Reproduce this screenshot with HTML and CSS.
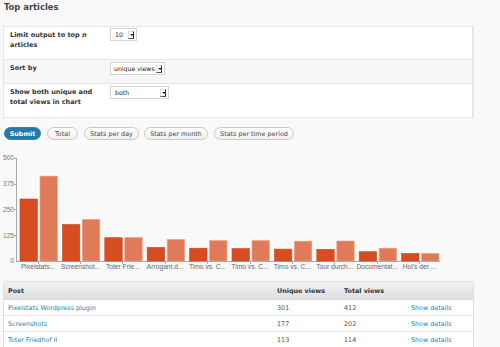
FILE: index.html
```html
<!DOCTYPE html>
<html>
<head>
<meta charset="utf-8">
<link rel="stylesheet" href="styles.css">
</head>
<body>
<div class="wrap">
  <h2 class="title">Top articles</h2>

  <div class="form">
    <div class="form-row r1">
      <div class="label">Limit output to top <em>n</em> articles</div>
      <div class="field"><div class="select w-10"><span class="val">10</span><span class="arrow"></span></div></div>
    </div>
    <div class="form-row r2 alt">
      <div class="label">Sort by</div>
      <div class="field"><div class="select w-sort"><span class="val">unique views</span><span class="arrow"></span></div></div>
    </div>
    <div class="form-row r3">
      <div class="label">Show both unique and total views in chart</div>
      <div class="field"><div class="select w-both"><span class="val">both</span><span class="arrow"></span></div></div>
    </div>
  </div>

  <div class="buttons">
    <span class="btn primary b-submit">Submit</span>
    <span class="btn b-total">Total</span>
    <span class="btn b-day">Stats per day</span>
    <span class="btn b-month">Stats per month</span>
    <span class="btn b-period">Stats per time period</span>
  </div>

  <svg class="chart" width="471" height="125" viewBox="3 150 471 125" xmlns="http://www.w3.org/2000/svg">
    <g class="ylab">
      <text x="14" y="160.4">500</text>
      <text x="14" y="186.2">375</text>
      <text x="14" y="212">250</text>
      <text x="14" y="237.6">125</text>
      <text x="14" y="263.4">0</text>
    </g>
    <g class="axis">
      <line x1="16.5" y1="158" x2="16.5" y2="262"/>
      <line x1="16" y1="261.5" x2="440" y2="261.5"/>
      <line x1="14" y1="158.5" x2="16.5" y2="158.5"/>
      <line x1="14" y1="184.5" x2="16.5" y2="184.5"/>
      <line x1="14" y1="209.5" x2="16.5" y2="209.5"/>
      <line x1="14" y1="235.5" x2="16.5" y2="235.5"/>
      <line x1="38.5" y1="261.5" x2="38.5" y2="264"/>
      <line x1="80.5" y1="261.5" x2="80.5" y2="264"/>
      <line x1="122.5" y1="261.5" x2="122.5" y2="264"/>
      <line x1="165.5" y1="261.5" x2="165.5" y2="264"/>
      <line x1="207.5" y1="261.5" x2="207.5" y2="264"/>
      <line x1="250.5" y1="261.5" x2="250.5" y2="264"/>
      <line x1="292.5" y1="261.5" x2="292.5" y2="264"/>
      <line x1="334.5" y1="261.5" x2="334.5" y2="264"/>
      <line x1="377.5" y1="261.5" x2="377.5" y2="264"/>
      <line x1="419.5" y1="261.5" x2="419.5" y2="264"/>
    </g>
    <g class="dark">
      <rect x="20" y="199" width="17.4" height="62"/>
      <rect x="62.4" y="224.5" width="17.4" height="36.5"/>
      <rect x="104.8" y="237.7" width="17.4" height="23.3"/>
      <rect x="147.2" y="247.4" width="17.4" height="13.6"/>
      <rect x="189.6" y="248.2" width="17.4" height="12.8"/>
      <rect x="232" y="248.6" width="17.4" height="12.4"/>
      <rect x="274.4" y="249.1" width="17.4" height="11.9"/>
      <rect x="316.8" y="249.3" width="17.4" height="11.7"/>
      <rect x="359.2" y="251.7" width="17.4" height="9.3"/>
      <rect x="401.6" y="253.4" width="17.4" height="7.6"/>
    </g>
    <g class="light">
      <rect x="40" y="176.1" width="17.4" height="84.9"/>
      <rect x="82.4" y="219.4" width="17.4" height="41.6"/>
      <rect x="124.8" y="237.5" width="17.4" height="23.5"/>
      <rect x="167.2" y="239.4" width="17.4" height="21.6"/>
      <rect x="209.6" y="240.6" width="17.4" height="20.4"/>
      <rect x="252" y="240.6" width="17.4" height="20.4"/>
      <rect x="294.4" y="241.2" width="17.4" height="19.8"/>
      <rect x="336.8" y="241" width="17.4" height="20"/>
      <rect x="379.2" y="248.2" width="17.4" height="12.8"/>
      <rect x="421.6" y="253.4" width="17.4" height="7.6"/>
    </g>
    <g class="xlab">
      <text x="38" y="269">Pixelstats...</text>
      <text x="80.4" y="269">Screenshot...</text>
      <text x="122.8" y="269">Toter Frie...</text>
      <text x="165.2" y="269">Arrogant.d...</text>
      <text x="207.6" y="269">Timo vs. C...</text>
      <text x="250" y="269">Timo vs. C...</text>
      <text x="292.4" y="269">Timo vs. C...</text>
      <text x="334.8" y="269">Tour durch...</text>
      <text x="377.2" y="269">Documentat...</text>
      <text x="419.6" y="269">Hol's der ...</text>
    </g>
  </svg>

  <div class="data">
    <div class="row head">
      <div class="c1">Post</div>
      <div class="c2">Unique views</div>
      <div class="c3">Total views</div>
      <div class="c4"></div>
    </div>
    <div class="row">
      <div class="c1"><a>Pixelstats Wordpress plugin</a></div>
      <div class="c2">301</div>
      <div class="c3">412</div>
      <div class="c4"><a>Show details</a></div>
    </div>
    <div class="row">
      <div class="c1"><a>Screenshots</a></div>
      <div class="c2">177</div>
      <div class="c3">202</div>
      <div class="c4"><a>Show details</a></div>
    </div>
    <div class="row">
      <div class="c1"><a>Toter Friedhof II</a></div>
      <div class="c2">113</div>
      <div class="c3">114</div>
      <div class="c4"><a>Show details</a></div>
    </div>
  </div>
</div>
</body>
</html>
```

FILE: styles.css
```css
html, body {
  margin: 0;
  padding: 0;
  background: #f9f9f9;
  overflow: hidden;
}
body {
  width: 500px;
  height: 347px;
  font-family: "DejaVu Sans", sans-serif;
  color: #333;
}
.wrap {
  margin-left: 3px;
  width: 471px;
}
.title {
  margin: 1px 0 13px 1px;
  font-size: 8.4px;
  line-height: 12px;
  font-weight: bold;
  color: #464646;
}

/* form table */
.form {
  background: #fff;
  border: 1px solid #e4e4e4;
  border-right: 2px solid #e6e6e6;
}
.form-row {
  display: flex;
  border-bottom: 1px solid #e6e6e6;
}
.form-row:last-child { border-bottom: 0; }
.form-row.alt { background: #f7f7f7; }
.r1 { height: 32px; }
.r2 { height: 23px; }
.r3 { height: 33px; }
.label {
  box-sizing: border-box;
  width: 106px;
  padding: 2.5px 14px 0 6px;
  font-size: 6.5px;
  line-height: 10.5px;
  font-weight: bold;
  color: #333;
}
.label em { font-style: italic; }
.field { padding-top: 2px; }
.r1 .field { padding-top: 1px; }
.select {
  box-sizing: border-box;
  height: 13px;
  display: flex;
  align-items: center;
  justify-content: space-between;
  background: #fff;
  border: 1px solid #d4d4d4;
  padding: 0 2px 0 4px;
  font-size: 6.2px;
  color: #222;
}
.w-10 { width: 27px; }
.w-sort { width: 55px; padding-left: 3px; }
.w-both { width: 59px; }
.arrow {
  position: relative;
  box-sizing: border-box;
  width: 6px;
  height: 8px;
  background: #fff;
  border: 1px solid #ddd;
  border-right-color: #333;
  border-bottom-color: #555;
}
.arrow::after {
  content: "";
  position: absolute;
  left: 0.5px;
  top: 2.5px;
  border-left: 2px solid transparent;
  border-right: 2px solid transparent;
  border-top: 2.5px solid #222;
}

/* buttons */
.buttons {
  display: flex;
  gap: 6px;
  margin: 9px 0 0 1px;
}
.btn {
  box-sizing: border-box;
  height: 13px;
  border-radius: 7px;
  display: flex;
  align-items: center;
  justify-content: center;
  font-size: 6.4px;
  color: #464646;
  background: linear-gradient(#ffffff, #f0f0f0);
  border: 1px solid #c8c8c8;
}
.btn.primary {
  background: #2479a8;
  border-color: #2a86b6;
  color: #fff;
  font-weight: bold;
}
.b-submit { width: 37px; }
.b-total { width: 31px; }
.b-day { width: 55px; margin-right: -1px; }
.b-month { width: 64px; }
.b-period { width: 80px; }

/* chart */
.chart {
  display: block;
  margin-top: 10px;
}
.ylab text {
  font-family: "Liberation Sans", sans-serif;
  font-size: 6.6px;
  fill: #777;
  text-anchor: end;
}
.xlab text {
  font-family: "Liberation Sans", sans-serif;
  font-size: 6.7px;
  fill: #666;
  text-anchor: middle;
}
.axis line {
  stroke: #a8a8a8;
  stroke-width: 1;
}
.dark rect {
  fill: #d64d21;
  stroke: #c8451c;
  stroke-width: 0.6;
}
.light rect {
  fill: #e07b5a;
  stroke: #eda085;
  stroke-width: 0.6;
}

/* data table */
.data {
  margin-top: 6px;
  background: #fff;
  border: 1px solid #dedede;
  border-bottom: 0;
  border-radius: 3px 3px 0 0;
  overflow: hidden;
}
.row {
  display: grid;
  grid-template-columns: 268px 67px 67px 66px;
  height: 15px;
  align-items: center;
  border-bottom: 1px solid #e4e4e4;
  font-size: 6.4px;
  color: #555;
}
.row.head {
  height: 17px;
  background: linear-gradient(#f2f2f2, #dfdfdf);
  border-bottom-color: #dcdcdc;
  font-weight: bold;
  color: #333;
}
.row .c1 { padding-left: 4px; }
.row .c2, .row .c3, .row .c4 { padding-left: 5px; }
.row a { color: #2583ad; }
```
